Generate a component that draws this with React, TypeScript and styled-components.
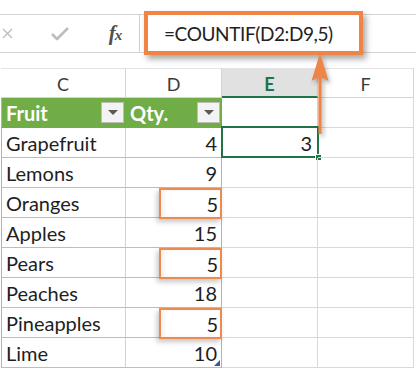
import React from "react";
import styled, { createGlobalStyle } from "styled-components";

const Global = createGlobalStyle`
  html, body { margin: 0; padding: 0; background: #fff; }
  body { width: 416px; height: 370px; overflow: hidden; font-family: Lato, "Open Sans", sans-serif; }
  * { box-sizing: border-box; }
`;

const Page = styled.div`
  position: relative;
  width: 416px;
  height: 370px;
  overflow: hidden;
  background: #fff;
  padding-top: 14px;
`;

const FormulaBar = styled.div`
  display: flex;
  height: 39px;
  border-top: 1px solid #d4d4d4;
  border-bottom: 1px solid #d4d4d4;
`;

const IconArea = styled.div`
  width: 140px;
  display: flex;
  align-items: center;
  border-right: 1px solid #cfcfcf;
`;

const IconSlot = styled.div<{ $w: number; $ml: number }>`
  width: ${(p) => p.$w}px;
  margin-left: ${(p) => p.$ml}px;
  display: flex;
  align-items: center;
  justify-content: center;
`;

const Fx = styled.span`
  font-family: "Liberation Serif", "DejaVu Serif", serif;
  font-style: italic;
  font-weight: bold;
  color: #505050;
  font-size: 21px;
  line-height: 1;
  letter-spacing: -1px;
  & > sub {
    font-size: 15px;
    vertical-align: 0;
  }
`;

const FormulaInput = styled.div`
  flex: 1;
  display: flex;
  align-items: flex-start;
`;

const Callout = styled.div`
  margin-left: 4px;
  margin-top: -4px;
  width: 219px;
  height: 44px;
  border: 4px solid #ee8446;
  background: #fff;
  box-shadow: 3px 4px 6px rgba(0, 0, 0, 0.35);
  display: flex;
  align-items: center;
  padding-left: 16px;
  font-size: 19px;
  letter-spacing: -0.4px;
  color: #222;
  white-space: nowrap;
  position: relative;
  z-index: 2;
`;

const Sheet = styled.div`
  margin-top: 15px;
  padding-left: 1px;
  display: grid;
  grid-template-columns: 125px 96px 96px 96px;
  grid-auto-rows: 30px;
`;

const ColHead = styled.div<{ $sel?: boolean }>`
  display: flex;
  align-items: center;
  justify-content: center;
  font-size: 18px;
  color: ${(p) => (p.$sel ? "#217346" : "#3a3a3a")};
  font-weight: ${(p) => (p.$sel ? 700 : 400)};
  background: ${(p) => (p.$sel ? "#e1e1e1" : "#fff")};
  border-top: 1px solid #e4e4e4;
  border-right: 1px solid #d4d4d4;
  border-bottom: ${(p) => (p.$sel ? "2px solid #217346" : "1px solid #d4d4d4")};
  padding-top: 2px;
`;

const TCell = styled.div<{ $first?: boolean; $num?: boolean; $head?: boolean }>`
  position: relative;
  display: flex;
  align-items: center;
  justify-content: ${(p) => (p.$num ? "flex-end" : "flex-start")};
  padding: ${(p) => (p.$num ? "0 4px 0 0" : "0 0 0 4px")};
  font-size: 20px;
  color: ${(p) => (p.$head ? "#fff" : "#1e1e1e")};
  font-weight: ${(p) => (p.$head ? 700 : 400)};
  background: ${(p) => (p.$head ? "#70ad47" : "#fff")};
  border-left: ${(p) => (p.$first ? "1px solid #9cc77f" : "none")};
  border-right: 1px solid ${(p) => (p.$head ? "#70ad47" : p.$first ? "#d2d2d2" : "#9cc77f")};
  border-bottom: 1px solid ${(p) => (p.$head ? "#70ad47" : "#a9d08e")};
  ${(p) => (p.$head ? "padding-right: 1px;" : "")}
`;

const HeadLabel = styled.span`
  flex: 1;
`;

const Filter = styled.span`
  width: 23px;
  height: 21px;
  background: #f3f3f3;
  border: 1px solid #bdbdbd;
  display: flex;
  align-items: center;
  justify-content: center;
  &::after {
    content: "";
    border-left: 5px solid transparent;
    border-right: 5px solid transparent;
    border-top: 5px solid #5a5a5a;
  }
`;

const Highlight = styled.span`
  align-self: flex-start;
  width: 63px;
  height: 31px;
  margin-right: -5px;
  border: 2px solid #ef8a4f;
  box-shadow: -2px 3px 5px rgba(0, 0, 0, 0.22), inset 3px 0 4px rgba(0, 0, 0, 0.06);
  display: flex;
  align-items: center;
  justify-content: flex-end;
  padding-right: 2px;
  position: relative;
  z-index: 1;
`;

const ResizeMark = styled.span`
  position: absolute;
  right: 1px;
  bottom: 1px;
  width: 0;
  height: 0;
  border-left: 6px solid transparent;
  border-bottom: 6px solid #3a55a4;
`;

const GridCell = styled.div`
  position: relative;
  display: flex;
  align-items: center;
  justify-content: flex-end;
  padding-right: 5px;
  font-size: 20px;
  color: #1e1e1e;
  border-right: 1px solid #d9d9d9;
  border-bottom: 1px solid #d9d9d9;
`;

const Selection = styled.span`
  position: absolute;
  left: -1px;
  top: -2px;
  right: -2px;
  bottom: -1px;
  border: 2px solid #217346;
  pointer-events: none;
`;

const FillHandle = styled.span`
  position: absolute;
  right: -5px;
  bottom: -5px;
  width: 7px;
  height: 7px;
  background: #217346;
  border: 1px solid #fff;
`;

const Arrow = styled.svg`
  position: absolute;
  left: 306px;
  top: 48px;
  width: 30px;
  height: 92px;
  z-index: 3;
  filter: drop-shadow(2px 3px 2px rgba(0, 0, 0, 0.3));
`;

const rows: [string, number, boolean][] = [
  ["Grapefruit", 4, false],
  ["Lemons", 9, false],
  ["Oranges", 5, true],
  ["Apples", 15, false],
  ["Pears", 5, true],
  ["Peaches", 18, false],
  ["Pineapples", 5, true],
  ["Lime", 10, false],
];

export default function App() {
  return (
    <Page>
      <Global />
      <FormulaBar>
        <IconArea>
          <IconSlot $w={14} $ml={0}>
            <svg width="11" height="11" viewBox="0 0 11 11">
              <path d="M1 1 L10 10 M10 1 L1 10" stroke="#bdbdbd" strokeWidth="1.4" fill="none" />
            </svg>
          </IconSlot>
          <IconSlot $w={24} $ml={34}>
            <svg width="20" height="15" viewBox="0 0 20 15">
              <path d="M2 8 L7 13 L18 2" stroke="#bdbdbd" strokeWidth="2.6" fill="none" strokeLinejoin="round" />
            </svg>
          </IconSlot>
          <IconSlot $w={22} $ml={32}>
            <Fx>
              f<sub>x</sub>
            </Fx>
          </IconSlot>
        </IconArea>
        <FormulaInput>
          <Callout>=COUNTIF(D2:D9,5)</Callout>
        </FormulaInput>
      </FormulaBar>

      <Sheet>
        <ColHead>C</ColHead>
        <ColHead>D</ColHead>
        <ColHead $sel>E</ColHead>
        <ColHead>F</ColHead>

        <TCell $first $head>
          <HeadLabel>Fruit</HeadLabel>
          <Filter />
        </TCell>
        <TCell $head>
          <HeadLabel>Qty.</HeadLabel>
          <Filter />
        </TCell>
        <GridCell />
        <GridCell />

        {rows.map(([name, qty, hl], i) => (
          <React.Fragment key={name}>
            <TCell $first>{name}</TCell>
            <TCell $num>
              {hl ? <Highlight>{qty}</Highlight> : qty}
              {i === rows.length - 1 && <ResizeMark />}
            </TCell>
            <GridCell>
              {i === 0 && (
                <>
                  3
                  <Selection>
                    <FillHandle />
                  </Selection>
                </>
              )}
            </GridCell>
            <GridCell />
          </React.Fragment>
        ))}
      </Sheet>

      <Arrow viewBox="306 48 30 92">
        <polygon
          points="320,53 328.5,81 321.6,77.5 321.6,134 318.4,134 318.4,77.5 311.5,81"
          fill="#ee8446"
        />
      </Arrow>
    </Page>
  );
}
